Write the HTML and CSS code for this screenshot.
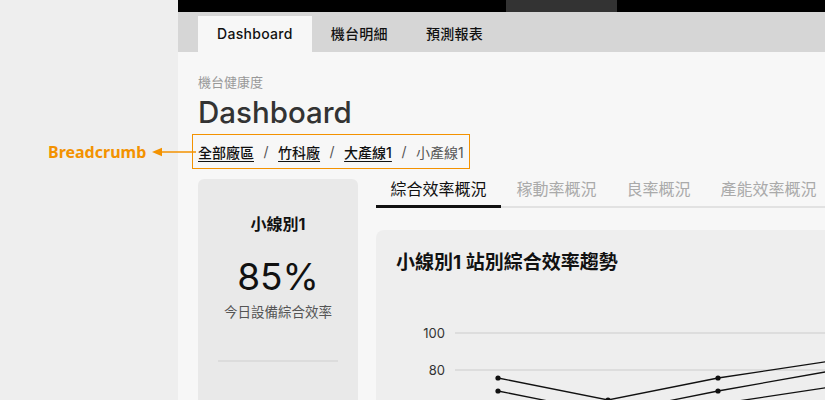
FILE: index.html
```html
<!DOCTYPE html>
<html lang="zh-Hant">
<head>
<meta charset="utf-8">
<title>Dashboard</title>
<link rel="stylesheet" href="styles.css">
</head>
<body>
<div class="app">
  <aside class="sidebar"></aside>
  <main class="main">
    <div class="topbar"><div class="topbar-block"></div></div>
    <nav class="tabbar">
      <a class="tab tab-active">Dashboard</a>
      <a class="tab">機台明細</a>
      <a class="tab">預測報表</a>
    </nav>
    <div class="content">
      <div class="eyebrow">機台健康度</div>
      <h1 class="title">Dashboard</h1>
      <div class="breadcrumb">
        <a class="crumb-link">全部廠區</a><span class="crumb-sep">/</span>
        <a class="crumb-link">竹科廠</a><span class="crumb-sep">/</span>
        <a class="crumb-link">大產線1</a><span class="crumb-sep">/</span>
        <span class="crumb-current">小產線1</span>
      </div>
      <div class="body">
        <section class="summary-card">
          <div class="summary-name">小線別1</div>
          <div class="summary-value">85%</div>
          <div class="summary-label">今日設備綜合效率</div>
          <div class="summary-divider"></div>
        </section>
        <section class="panel">
          <div class="subtabs">
            <a class="subtab subtab-active">綜合效率概況</a>
            <a class="subtab">稼動率概況</a>
            <a class="subtab">良率概況</a>
            <a class="subtab">產能效率概況</a>
          </div>
          <div class="chart-card">
            <h2 class="chart-title">小線別1 站別綜合效率趨勢</h2>
            <svg class="chart" width="480" height="130" viewBox="0 0 480 130">
              <text class="axis-label" x="49" y="60.5" text-anchor="end">100</text>
              <text class="axis-label" x="49" y="98" text-anchor="end">80</text>
              <line class="grid" x1="59" y1="56" x2="480" y2="56"/>
              <line class="grid" x1="59" y1="93" x2="480" y2="93"/>
              <polyline class="series" points="102,101 212,123 322,101 432,84.5"/>
              <polyline class="series" points="102,114 212,136 322,114 432,94.5"/>
              <polyline class="series" points="102,127 212,149 322,127 432,110.5"/>
              <g class="dots">
                <circle cx="102" cy="101" r="2.6"/>
                <circle cx="212" cy="123" r="2.6"/>
                <circle cx="322" cy="101" r="2.6"/>
                <circle cx="102" cy="114" r="2.6"/>
                <circle cx="212" cy="136" r="2.6"/>
                <circle cx="322" cy="114" r="2.6"/>
                <circle cx="102" cy="127" r="2.6"/>
                <circle cx="322" cy="127" r="2.6"/>
              </g>
            </svg>
          </div>
        </section>
      </div>
    </div>
  </main>
  <div class="annotation">
    <span class="annotation-text">Breadcrumb</span>
    <svg class="annotation-arrow" width="44" height="10" viewBox="0 0 44 10">
      <path d="M8 5H44" stroke="#f39200" stroke-width="1.6"/>
      <path d="M0 5L10 0.8V9.2Z" fill="#f39200"/>
    </svg>
  </div>
</div>
</body>
</html>
```

FILE: styles.css
```css
* { box-sizing: border-box; }

html, body {
  margin: 0;
  padding: 0;
  height: 100%;
  overflow: hidden;
}

body {
  font-family: "Inter", "Noto Sans CJK TC", sans-serif;
  color: #111;
  background: #f7f7f7;
}

.app {
  position: relative;
  display: flex;
  width: 100%;
  height: 400px;
  overflow: hidden;
}

.sidebar {
  flex: 0 0 178px;
  background: #eeeeee;
}

.main {
  flex: 0 0 1000px;
  display: flex;
  flex-direction: column;
  background: #f7f7f7;
}

.topbar {
  flex-shrink: 0;
  height: 12px;
  background: #000;
  padding-left: 328px;
}

.topbar-block {
  width: 111px;
  height: 12px;
  background: #333;
}

.tabbar {
  flex-shrink: 0;
  height: 40px;
  background: #d6d6d6;
  display: flex;
  align-items: flex-end;
  padding-left: 20px;
}

.tab {
  height: 36px;
  line-height: 36px;
  padding: 0 19px;
  font-size: 14px;
  font-weight: 500;
  letter-spacing: 0.3px;
  color: #111;
}

.tab-active {
  background: #f7f7f7;
}

.content {
  flex-shrink: 0;
  padding: 21px 20px 0 20px;
}

.eyebrow {
  font-size: 13px;
  line-height: 18px;
  color: #999;
}

.title {
  margin: 3px 0 0 0;
  font-size: 29.5px;
  line-height: 36px;
  font-weight: 500;
  color: #333;
}

.breadcrumb {
  display: inline-flex;
  align-items: center;
  height: 35px;
  margin: 4px 0 0 -6px;
  padding: 0 5px;
  border: 1px solid #f39200;
  font-size: 14px;
}

.crumb-link {
  color: #111;
  font-weight: 500;
  text-decoration: underline;
  text-underline-offset: 3px;
}

.crumb-sep {
  color: #555;
  margin: 0 9.5px;
}

.crumb-current {
  color: #555;
}

.body {
  display: flex;
  gap: 18px;
  margin-top: 10px;
}

.summary-card {
  flex: 0 0 160px;
  height: 240px;
  background: #e9e9e9;
  border-radius: 6px;
  padding: 33px 20px 0 20px;
  text-align: center;
}

.summary-name {
  font-size: 16px;
  line-height: 24px;
  font-weight: 700;
}

.summary-value {
  margin-top: 19px;
  font-size: 37px;
  line-height: 44px;
  font-weight: 400;
}

.summary-label {
  margin-top: 3px;
  font-size: 13.5px;
  line-height: 20px;
  color: #555;
}

.summary-divider {
  margin-top: 38px;
  height: 2px;
  background: #dcdcdc;
}

.panel {
  flex: 1;
  display: flex;
  flex-direction: column;
}

.subtabs {
  display: flex;
  gap: 1px;
  border-bottom: 2px solid #e2e2e2;
}

.subtab {
  padding: 0 14.5px 6px 14.5px;
  line-height: 20px;
  font-size: 16px;
  color: #aaa;
  border-bottom: 3px solid transparent;
  margin-bottom: -2px;
}

.subtab-active {
  color: #111;
  border-bottom-color: #111;
}

.chart-card {
  margin-top: 22px;
  height: 240px;
  background: #eeeeee;
  border-radius: 8px;
  padding: 19px 0 0 20px;
}

.chart-title {
  margin: 0;
  font-size: 19px;
  line-height: 28px;
  font-weight: 700;
  color: #111;
}

.chart {
  display: block;
  overflow: visible;
}

.axis-label {
  font-family: "Inter", sans-serif;
  font-size: 13px;
  fill: #333;
}

.grid {
  stroke: #cccccc;
  stroke-width: 1;
}

.series {
  fill: none;
  stroke: #111;
  stroke-width: 1.3;
}

.dots circle {
  fill: #111;
}

.annotation {
  position: absolute;
  left: 48px;
  top: 141px;
  display: flex;
  align-items: center;
  gap: 6px;
}

.annotation-text {
  font-family: "Noto Sans", sans-serif;
  font-size: 16px;
  line-height: 22px;
  font-weight: 700;
  color: #f39200;
}

.annotation-arrow {
  display: block;
}
```
